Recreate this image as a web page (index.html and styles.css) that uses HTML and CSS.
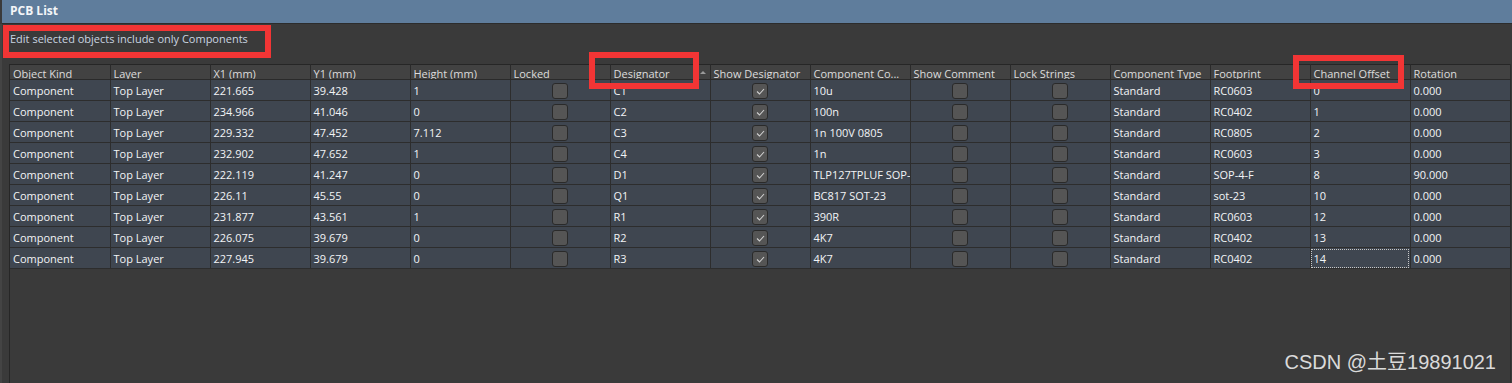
FILE: index.html
```html
<!DOCTYPE html>
<html lang="en">
<head>
  <meta charset="UTF-8" />
  <title>PCB List</title>
  <link rel="stylesheet" href="styles.css">
</head>
<body>
  <div class="title-bar">PCB List</div>

  <div class="panel">
    <div class="filter">Edit selected objects include only Components</div>

    <div class="grid-area">
      <table class="grid">
        <thead>
          <tr>
            <th>Object Kind</th>
            <th>Layer</th>
            <th>X1 (mm)</th>
            <th>Y1 (mm)</th>
            <th>Height (mm)</th>
            <th>Locked</th>
            <th class="sorted">Designator</th>
            <th>Show Designator</th>
            <th>Component Co...</th>
            <th>Show Comment</th>
            <th>Lock Strings</th>
            <th>Component Type</th>
            <th>Footprint</th>
            <th>Channel Offset</th>
            <th>Rotation</th>
          </tr>
        </thead>
        <tbody id="rows"></tbody>
      </table>
    </div>
  </div>

  <!-- annotation boxes -->
  <div class="mark mark-filter"></div>
  <div class="mark mark-designator"></div>
  <div class="mark mark-channel"></div>

  <div class="watermark">CSDN @土豆19891021</div>

  <script>
    const parts = [
      ["221.665", "39.428", "1",     "C1", "10u",               "RC0603", "0",  "0.000"],
      ["234.966", "41.046", "0",     "C2", "100n",              "RC0402", "1",  "0.000"],
      ["229.332", "47.452", "7.112", "C3", "1n 100V 0805",      "RC0805", "2",  "0.000"],
      ["232.902", "47.652", "1",     "C4", "1n",                "RC0603", "3",  "0.000"],
      ["222.119", "41.247", "0",     "D1", "TLP127TPLUF SOP-4", "SOP-4-F", "8", "90.000"],
      ["226.11",  "45.55",  "0",     "Q1", "BC817 SOT-23",      "sot-23", "10", "0.000"],
      ["231.877", "43.561", "1",     "R1", "390R",              "RC0603", "12", "0.000"],
      ["226.075", "39.679", "0",     "R2", "4K7",               "RC0402", "13", "0.000"],
      ["227.945", "39.679", "0",     "R3", "4K7",               "RC0402", "14", "0.000"]
    ];

    const box = '<span class="check"></span>';
    const ticked = '<span class="check ticked"><svg width="9" height="7" viewBox="0 0 9 7"><path d="M1 3.5 L3.5 6 L8 1" fill="none" stroke="#d0d0d0" stroke-width="1.1"/></svg></span>';

    const tbody = document.getElementById('rows');
    parts.forEach((p, i) => {
      const tr = document.createElement('tr');
      const focus = i === parts.length - 1 ? ' class="focus"' : '';
      tr.innerHTML =
        `<td>Component</td><td>Top Layer</td><td>${p[0]}</td><td>${p[1]}</td><td>${p[2]}</td>` +
        `<td class="center">${box}</td><td>${p[3]}</td><td class="center">${ticked}</td>` +
        `<td class="clip">${p[4]}</td><td class="center">${box}</td><td class="center">${box}</td>` +
        `<td>Standard</td><td>${p[5]}</td><td${focus}>${p[6]}</td><td>${p[7]}</td>`;
      tbody.appendChild(tr);
    });
  </script>
</body>
</html>
```

FILE: styles.css
```css
body {
  margin: 0;
  width: 1512px;
  height: 383px;
  overflow: hidden;
  background: #3a3a3a;
  font-family: 'Open Sans', 'Noto Sans', sans-serif;
  font-size: 11px;
  color: #eef0f2;
  position: relative;
}

.title-bar {
  height: 23px;
  line-height: 22px;
  padding-left: 8px;
  margin-left: 2px;
  background: #5f7d9c;
  color: #f4f6f8;
  font-weight: bold;
  font-size: 12px;
  border-bottom: 1px solid #2c2c2c;
}

.panel {
  border-left: 2px solid #444;
  padding-left: 7px;
  height: 359px;
  box-sizing: border-box;
  display: flex;
  flex-direction: column;
}

.filter {
  height: 40px;
  line-height: 29px;
  padding-left: 1px;
  box-sizing: border-box;
  color: #c9d4e0;
}

.grid-area {
  flex: 1;
  width: 1502px;
  border-left: 1px solid #262626;
  border-right: 1px solid #2e2e2e;
  box-sizing: border-box;
}

/* Grid */
.grid {
  border-collapse: collapse;
  table-layout: fixed;
  width: 1500px;
  border-top: 1px solid #262626;
}

.grid th,
.grid td {
  width: 100px;
  padding: 0 0 0 3px;
  box-sizing: border-box;
  white-space: nowrap;
  overflow: hidden;
  text-align: left;
}

.grid th {
  height: 14px;
  line-height: 11px;
  padding-top: 3px;
  vertical-align: top;
  background: #424242;
  color: #dcdcdc;
  font-weight: normal;
  border-bottom: 1px solid #2a2a2a;
  border-left: 1px solid #2a2a2a;
  position: relative;
}

.grid th:first-child {
  border-left: none;
}

.grid th.sorted::after {
  content: "";
  position: absolute;
  right: 4px;
  top: 6px;
  border-left: 3px solid transparent;
  border-right: 3px solid transparent;
  border-bottom: 3px solid #9a9a9a;
}

.grid td {
  height: 21px;
  line-height: 19px;
  background: #3f4650;
  border-right: 1px solid #2d2d2d;
  border-bottom: 1px solid #2d2d2d;
  color: #f2f4f6;
}

.grid td.clip {
  text-overflow: clip;
}

.grid td.center {
  text-align: center;
  padding: 0;
}

.grid td.focus {
  outline: 1px dotted #c8c8c8;
  outline-offset: -2px;
}

.check {
  display: inline-block;
  width: 14px;
  height: 14px;
  margin-top: 2px;
  vertical-align: top;
  background: #555555;
  border: 1px solid #2a2a2a;
  border-radius: 3px;
  position: relative;
}

.check svg {
  position: absolute;
  left: 3px;
  top: 4px;
}

/* Red annotation boxes drawn over the screenshot */
.mark {
  position: absolute;
  border: 6px solid #f23535;
  box-sizing: border-box;
}

.mark-filter {
  left: 3px;
  top: 25px;
  width: 268px;
  height: 33px;
}

.mark-designator {
  left: 589px;
  top: 52px;
  width: 110px;
  height: 37px;
}

.mark-channel {
  left: 1293px;
  top: 55px;
  width: 111px;
  height: 34px;
}

.watermark {
  position: absolute;
  right: 16px;
  bottom: 8px;
  font-family: 'Liberation Sans', 'Noto Sans CJK SC', sans-serif;
  font-size: 20px;
  color: #dadada;
}
```
